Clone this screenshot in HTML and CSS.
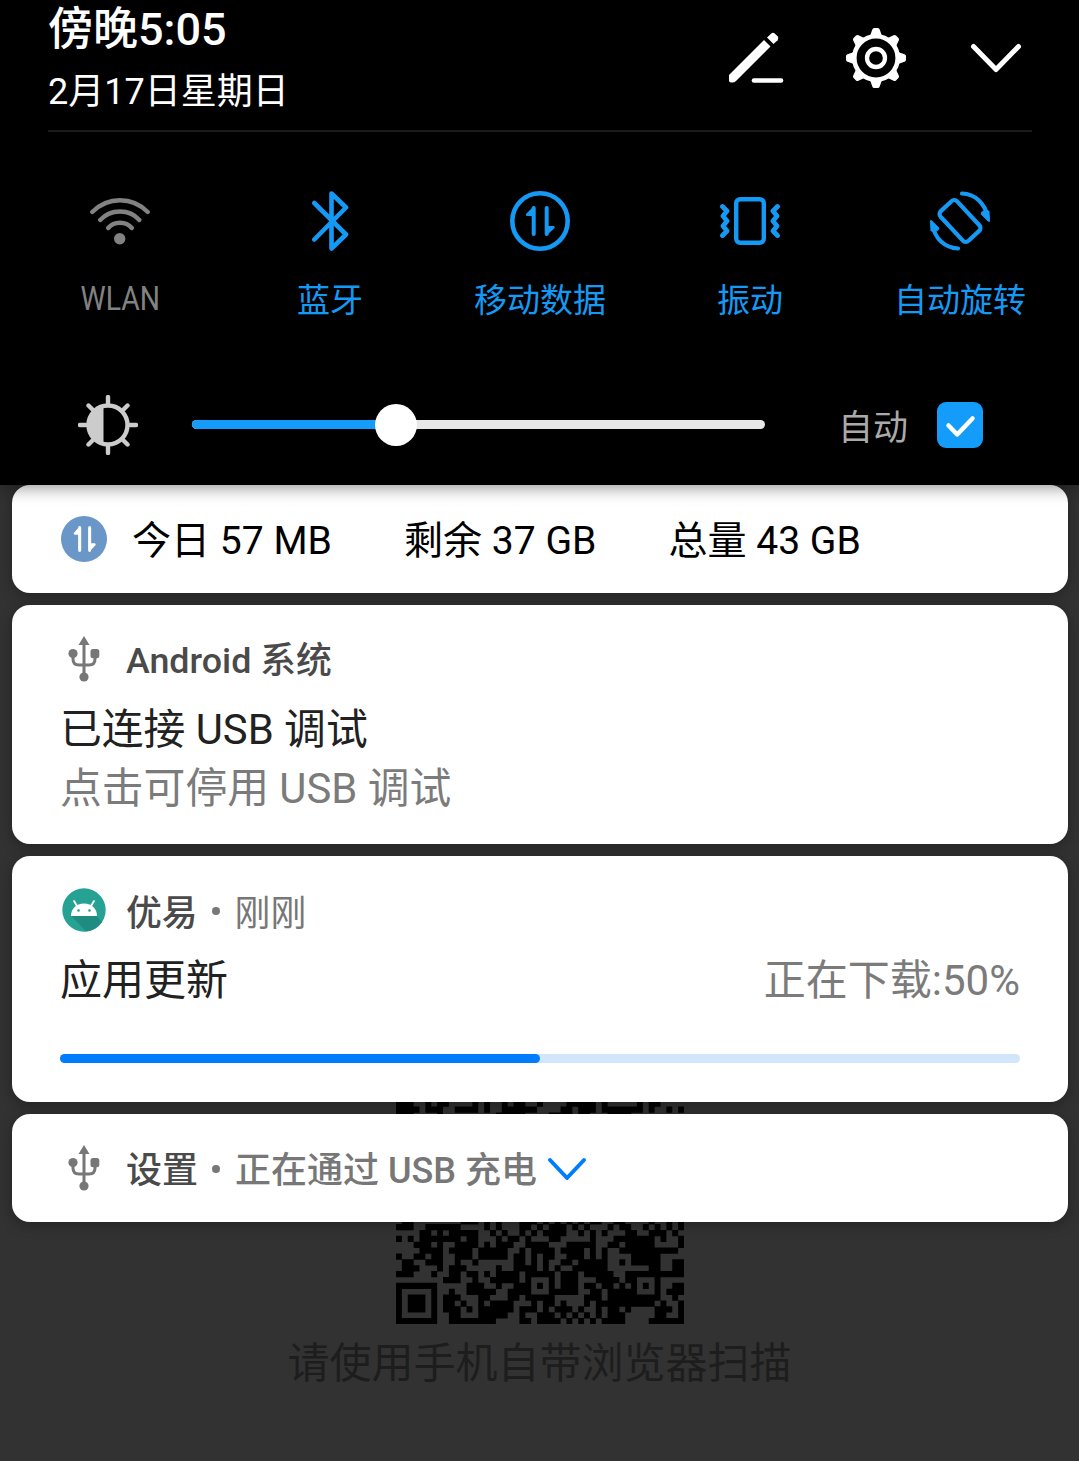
FILE: index.html
```html
<!DOCTYPE html>
<html lang="zh-CN">
<head>
<meta charset="utf-8">
<title>通知面板</title>
<link rel="stylesheet" href="styles.css">
</head>
<body>
<svg class="defs" aria-hidden="true">
  <symbol id="usb" viewBox="0 0 32 46">
    <path d="M16 8v30M5 17v6q0 6 6 6h10q6 0 6-6v-6" fill="none" stroke="currentColor" stroke-width="3"/>
    <path d="M16 0l5.500 9h-11z" fill="currentColor"/>
    <circle cx="5" cy="17.500" r="4.600" fill="currentColor"/>
    <rect x="22.500" y="13" width="8.800" height="9.200" rx="2.500" fill="currentColor"/>
    <circle cx="16" cy="41" r="4.600" fill="currentColor"/>
  </symbol>
  <symbol id="data" viewBox="0 0 30 30">
    <path d="M8.700 28V2M21.700 2v26" fill="none" stroke="currentColor" stroke-width="4" stroke-linecap="round"/>
    <path d="M9 0L1 8q-.6 2 1.500 2H9zM21 30l8.500-8q.6-2-1.500-2H21z" fill="currentColor"/>
  </symbol>
</svg>

<main class="screen">
  <div class="backdrop">
    <svg class="qr" id="qr" viewBox="0 0 49 49"><path id="modules" d=""/></svg>
    <p class="hint">请使用手机自带浏览器扫描</p>
  </div>

  <header class="panel">
    <div class="top">
      <div>
        <div class="time">傍晚5:05</div>
        <div class="date">2月17日星期日</div>
      </div>
      <div class="actions">
        <svg width="60" height="60" viewBox="0 0 60 60" fill="#fff">
          <path d="M3 47L38 12l6.500 6.500L10 53q-1.500 1.500-4 1.500H5q-2 0-2-2z"/>
          <path d="M41 9.500l4-3.800q2-1.700 4 0l2.600 2.600q1.600 2 0 4L47.500 16z"/>
          <path d="M28 52.500h27" stroke="#fff" stroke-width="4.600" stroke-linecap="round"/>
        </svg>
        <svg width="60" height="60" viewBox="-30 -30 60 60" fill="#fff">
          <g id="teeth">
            <path id="tooth" d="M-6-22l2.300-6.500q.4-1.500 2-1.500h3.400q1.600 0 2 1.500L6-22z"/>
            <use href="#tooth" transform="rotate(90)"/><use href="#tooth" transform="rotate(180)"/><use href="#tooth" transform="rotate(270)"/>
          </g>
          <use href="#teeth" transform="rotate(45)"/>
          <circle r="21.700" fill="#000" stroke="#fff" stroke-width="4.600"/>
          <circle r="9" fill="none" stroke="#fff" stroke-width="4.300"/>
        </svg>
        <svg width="60" height="60" viewBox="0 0 60 60" fill="none" stroke="#fff" stroke-width="5" stroke-linecap="round" stroke-linejoin="round">
          <path d="M7.500 18.500L30 41.500 52.500 18.500"/>
        </svg>
      </div>
    </div>

    <div class="tiles">
      <div class="tile off">
        <svg width="60" height="60" viewBox="0 0 60 60" fill="none" stroke="currentColor" stroke-width="4.400" stroke-linecap="round">
          <path d="M2.300 21Q14 9.300 30 9.300T57.700 21M10.200 29Q18 20.500 30 20.500T49.300 29M18.200 37Q22.500 31.700 30 31.700T41.800 37"/>
          <circle cx="29.700" cy="47.700" r="5.700" fill="currentColor" stroke="none"/>
        </svg>
        <span class="narrow">WLAN</span>
      </div>
      <div class="tile">
        <svg width="60" height="60" viewBox="0 0 60 60" fill="none" stroke="currentColor" stroke-width="4.600" stroke-linecap="round" stroke-linejoin="round">
          <path d="M14.300 12L46 43.500 31.500 57.500V2.500L46 16.500 14.300 48.500"/>
        </svg>
        <span>蓝牙</span>
      </div>
      <div class="tile">
        <svg width="60" height="60" viewBox="0 0 60 60">
          <circle cx="30" cy="30" r="27.700" fill="none" stroke="currentColor" stroke-width="4.600"/>
          <use href="#data" x="15" y="15" width="30" height="30"/>
        </svg>
        <span>移动数据</span>
      </div>
      <div class="tile">
        <svg width="60" height="60" viewBox="0 0 60 60" fill="none" stroke="currentColor" stroke-width="4.400" stroke-linecap="round" stroke-linejoin="round">
          <rect x="16.200" y="8.200" width="27.600" height="43.600" rx="4"/>
          <path d="M2.500 15.500L7 20 3 25l4 5-4 5 4 5-4.500 4.500M57.500 15.500L53 20l4 5-4 5 4 5-4 5 4.500 4.500" stroke-width="4.800"/>
        </svg>
        <span>振动</span>
      </div>
      <div class="tile">
        <svg width="60" height="60" viewBox="0 0 60 60" fill="none" stroke="currentColor" stroke-width="4.200" stroke-linecap="round">
          <rect x="18.700" y="9.700" width="22.600" height="40.600" rx="4" transform="rotate(-43 30 30)"/>
          <path d="M32 2.500C45 3 55 12 57.500 26M28 57.500C15 57 5 48 2.500 34"/>
          <path d="M59.500 20l.5 10q-.5 1.500-2 .5l-7-7q-1-2 1-3l4-2zM.5 40L0 30q.5-1.500 2-.5l7 7q1 2-1 3l-4 2z" fill="currentColor" stroke="none"/>
        </svg>
        <span>自动旋转</span>
      </div>
    </div>

    <div class="brightness">
      <svg width="60" height="60" viewBox="-30 -30 60 60" fill="none" stroke="#ccc" stroke-width="4.400" stroke-linecap="round">
        <path d="M0-28v6M0 28v-6M-28 0h6M28 0h-6M-19.500-19.500l5 5M19.500-19.500l-5 5M-19.500 19.500l5-5M19.500 19.500l-5-5"/>
        <circle r="19.500"/>
        <path d="M-4.500-18.500a19 19 0 0 0 0 37z" fill="#ccc" stroke="none"/>
      </svg>
      <div class="slider"><div class="level"></div><div class="knob"></div></div>
      <span class="auto">自动</span>
      <span class="check">
        <svg width="46" height="46" viewBox="0 0 46 46" fill="none" stroke="#fff" stroke-width="4.500" stroke-linecap="round" stroke-linejoin="round"><path d="M11.500 23.500l8.700 9L35.500 16.500"/></svg>
      </span>
    </div>
  </header>

  <section class="cards">
    <article class="card usage">
      <span class="badge"><svg width="23" height="26" viewBox="0 0 30 30" preserveAspectRatio="none"><use href="#data" width="30" height="30"/></svg></span>
      <span>今日 57 MB</span><span>剩余 37 GB</span><span>总量 43 GB</span>
    </article>

    <article class="card system">
      <div class="head">
        <svg class="usb"><use href="#usb"/></svg>
        <span class="app">Android 系统</span>
      </div>
      <div class="title">已连接 USB 调试</div>
      <div class="title sub">点击可停用 USB 调试</div>
    </article>

    <article class="card update">
      <div class="head">
        <svg class="robot" width="44" height="44" viewBox="0 0 44 44">
          <circle cx="22" cy="22" r="21.700" fill="#26a295"/>
          <path d="M9 27.500L24 43.500A21.700 21.700 0 0 0 40 34L34 27.500z" fill="#208c81"/>
          <path d="M9 28c0-7 5-12.500 13-12.500S35 21 35 28z" fill="#fff"/>
          <path d="M12 13l3 5M32 13l-3 5" stroke="#fff" stroke-width="1.800" stroke-linecap="round"/>
          <circle cx="16.500" cy="22.500" r="1.300" fill="#26a295"/><circle cx="27.500" cy="22.500" r="1.300" fill="#26a295"/>
        </svg>
        <span class="app">优易</span><i class="dot"></i><span class="meta">刚刚</span>
      </div>
      <div class="line"><span class="title">应用更新</span><span class="title sub">正在下载:50%</span></div>
      <div class="progress"><div class="done" style="width:50%"></div></div>
    </article>

    <article class="card charge">
      <div class="head">
        <svg class="usb"><use href="#usb"/></svg>
        <span class="app">设置</span><i class="dot"></i><span class="meta strong">正在通过 USB 充电</span>
        <svg class="more" width="40" height="24" viewBox="0 0 40 24" fill="none" stroke="#007dff" stroke-width="4" stroke-linecap="round" stroke-linejoin="round"><path d="M3 3l17 18L37 3"/></svg>
      </div>
    </article>
  </section>
</main>
<script src="qr.js"></script>
</body>
</html>
```
FILE: styles.css
```css
* { box-sizing: border-box; }
body {
  margin: 0;
  background: #323232;
  font-family: Roboto, "Noto Sans CJK SC", sans-serif;
}
svg { display: block; flex: none; }
.defs { position: absolute; width: 0; height: 0; }
.screen { position: relative; width: 1079px; height: 1461px; overflow: hidden; }

.backdrop {
  position: absolute;
  inset: 0;
  padding-top: 1036px;
  display: flex;
  flex-direction: column;
  align-items: center;
}
.qr { width: 288px; height: 288px; }
.hint { margin: 9px 0 0; font-size: 42px; line-height: 62px; color: #1d1d1d; }

.panel {
  position: relative;
  z-index: 2;
  height: 485px;
  background: #000;
  box-shadow: 0 2px 16px rgba(0, 0, 0, .45);
}
.top {
  display: flex;
  justify-content: space-between;
  height: 132px;
  margin: 0 47px 0 48px;
  border-bottom: 2px solid #1c1c1c;
  color: #fff;
}
.time { font-size: 45px; line-height: 60px; font-weight: 500; }
.date { font-size: 36px; line-height: 64px; }
.actions { display: flex; gap: 60px; padding: 28px 6px 0 0; }

.tiles { display: grid; grid-template-columns: repeat(5, 210px); margin-left: 15px; padding-top: 59px; }
.tile {
  display: flex;
  flex-direction: column;
  align-items: center;
  gap: 27px;
  color: #149af5;
  font-size: 33px;
  line-height: 46px;
}
.off { gap: 25px; color: #828282; }
.narrow { transform: scaleX(.86); }

.brightness { display: flex; align-items: center; height: 60px; margin-top: 71px; padding-left: 78px; }
.slider {
  position: relative;
  width: 573px;
  height: 9px;
  margin: 0 0 1px 54px;
  border-radius: 5px;
  background: #e8e8e8;
}
.level { width: 204px; height: 9px; border-radius: 5px; background: #149cfb; }
.knob {
  position: absolute;
  left: 183px;
  top: -16px;
  width: 42px;
  height: 42px;
  border-radius: 50%;
  background: #fff;
}
.auto { margin-left: 73px; width: 72px; font-size: 35px; line-height: 50px; padding-top: 7px; color: #aaa; }
.check { margin-left: 27px; border-radius: 9px; background: #149cfb; }

.cards { position: relative; display: flex; flex-direction: column; gap: 12px; padding: 0 11px 0 12px; }
.card {
  border-radius: 18px;
  background: #fff;
  box-shadow: 0 3px 14px rgba(0, 0, 0, .3);
  padding: 0 48px;
}
.usage {
  display: flex;
  align-items: center;
  height: 108px;
  gap: 72px;
  font-size: 39.1px;
  line-height: 52px;
  padding-left: 49px;
  color: #000;
}
.usage span:not(.badge) { padding-top: 3px; }
.badge {
  display: grid;
  place-items: center;
  width: 46px;
  height: 46px;
  margin-right: -47px;
  border-radius: 50%;
  background: #6b96c8;
  color: #fff;
}
.system { height: 239px; padding-top: 28px; }
.head { display: flex; align-items: center; height: 52px; font-size: 35.8px; line-height: 52px; color: #777; }
.usb { width: 32px; height: 46px; margin: 0 26px 0 8px; color: #777; }
.robot { margin: 0 20px 0 2px; }
.app { color: #4a4a4a; font-weight: 500; padding-top: 4px; }
.update .app, .update .meta { padding-top: 7px; }
.dot { width: 8px; height: 8px; margin: 2px 15px 0 14px; border-radius: 50%; background: #777; }
.meta { padding-top: 5px; }
.strong { font-weight: 500; }
.more { margin: 1px 0 0 10px; }
.title { font-size: 41.8px; line-height: 60px; color: #212121; }
.system .title { padding-top: 15px; }
.system .sub { padding-top: 0; margin-top: -1px; }
.title.sub { color: #7b7b7b; }
.update { height: 246px; padding-top: 28px; }
.update .title { font-size: 42px; }
.line { display: flex; justify-content: space-between; padding-top: 15px; }
.progress { height: 9px; margin-top: 43px; border-radius: 5px; background: #d1e6fa; }
.done { height: 9px; border-radius: 5px; background: #007dff; }
.charge { height: 108px; padding-top: 28px; }
.charge .head { font-size: 36px; }
.charge .app { padding-top: 5px; }
```
FILE: qr.js
```js
// Dark module runs per row, as [first column, column after the last].
const rows = {
  11: [[0,3],[5,6],[7,9],[13,14],[15,16],[18,19],[20,22],[24,25],[29,34],[35,36],[41,42],[43,45]],
  12: [[0,4],[5,8],[10,14],[15,16],[18,24],[28,30],[31,34],[35,42],[43,44],[46,47],[48,49]],
  13: [[0,3],[7,8],[17,22],[26,30],[31,33],[36,40]],
  31: [[1,3],[11,14],[15,16],[17,18],[21,24],[25,26],[27,28],[29,30],[31,32],[33,35],[37,39],[43,44],[46,47],[48,49]],
  32: [[0,3],[5,11],[15,16],[17,18],[21,23],[24,25],[26,29],[30,31],[32,33],[36,37],[38,40],[42,43],[44,45],[46,47],[48,49]],
  33: [[4,6],[7,8],[9,14],[16,17],[18,19],[21,22],[23,24],[25,29],[31,32],[33,34],[35,36],[39,41],[43,46],[47,48]],
  34: [[0,1],[2,3],[4,11],[12,14],[17,18],[19,21],[22,23],[26,28],[33,34],[37,44],[45,46],[48,49]],
  35: [[3,6],[7,8],[10,14],[15,16],[17,20],[22,26],[29,34],[36,38],[39,44],[48,49]],
  36: [[4,8],[9,13],[14,19],[21,22],[23,27],[28,32],[33,34],[35,36],[38,44],[44,48]],
  37: [[0,1],[3,5],[6,8],[10,13],[14,19],[20,22],[23,24],[25,27],[29,32],[33,34],[35,36],[40,45]],
  38: [[1,3],[5,8],[10,11],[13,14],[20,22],[23,24],[25,26],[28,30],[31,36],[38,39],[40,45],[47,49]],
  39: [[1,4],[7,8],[9,12],[17,18],[20,24],[25,26],[27,28],[30,36],[43,45],[47,49]],
  40: [[0,3],[6,7],[9,11],[12,14],[15,16],[17,21],[22,27],[28,31],[32,37],[39,49]],
  41: [[8,11],[13,14],[16,21],[22,23],[26,27],[28,31],[34,38],[39,41],[44,45]],
  42: [[0,7],[12,15],[17,18],[20,23],[24,25],[26,27],[28,31],[32,34],[35,37],[38,39],[40,41],[42,43],[44,45],[47,49]],
  43: [[0,1],[6,7],[9,10],[12,17],[19,23],[26,31],[33,35],[36,41],[44,45],[46,49]],
  44: [[0,1],[2,5],[6,7],[8,11],[14,16],[19,21],[22,27],[32,35],[36,45],[47,48]],
  45: [[0,1],[2,5],[6,7],[8,10],[11,12],[14,15],[16,20],[23,24],[25,27],[28,29],[32,33],[34,44],[45,46],[48,49]],
  46: [[0,1],[2,5],[6,7],[8,11],[12,13],[14,20],[21,24],[25,26],[27,30],[31,32],[34,35],[36,38],[39,40],[44,47],[48,49]],
  47: [[0,1],[6,7],[9,11],[14,19],[21,22],[24,27],[28,29],[30,31],[32,33],[34,35],[36,39],[44,46],[48,49]],
  48: [[0,7],[9,17],[21,23],[24,28],[29,30],[31,32],[33,34],[35,39],[43,49]]
};
document.getElementById("modules").setAttribute("d",
  Object.entries(rows).map(([y, runs]) =>
    runs.map(([a, b]) => `M${a} ${y}H${b}v1.05H${a}z`).join("")).join(""));
```
